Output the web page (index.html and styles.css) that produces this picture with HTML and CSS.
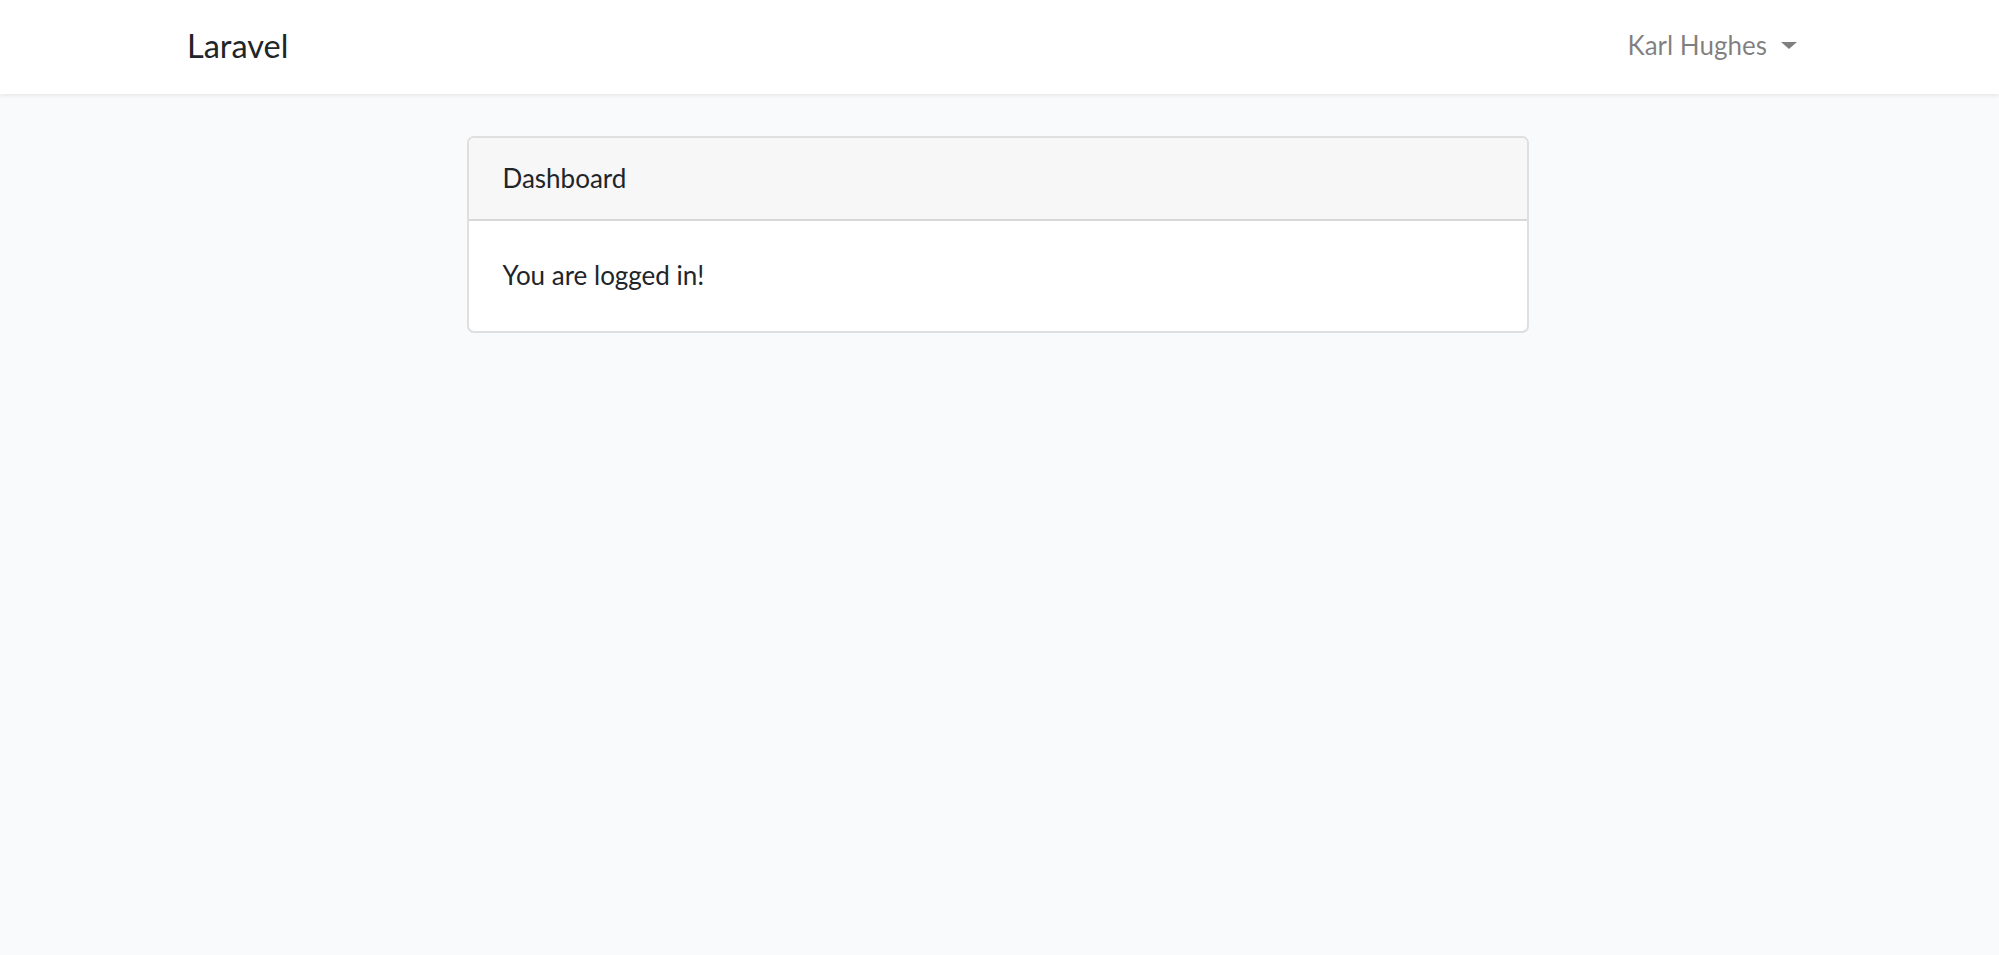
FILE: index.html
```html
<!DOCTYPE html>
<html lang="en">
<head>
    <meta charset="UTF-8">
    <meta name="viewport" content="width=device-width, initial-scale=1.0">
    <title>Laravel</title>
    <link rel="stylesheet" href="styles.css">
</head>
<body>
    <nav class="navbar">
        <div class="navbar-inner">
            <a class="brand" href="#">Laravel</a>
            <div class="user-menu">
                <a class="user-toggle" href="#">Karl Hughes <span class="caret"></span></a>
            </div>
        </div>
    </nav>
    <main class="content">
        <div class="card">
            <div class="card-header">Dashboard</div>
            <div class="card-body">You are logged in!</div>
        </div>
    </main>
</body>
</html>
```

FILE: styles.css
```css
body {
    margin: 0;
    padding: 0;
    font-family: Lato, "Noto Sans", sans-serif;
    font-size: 26px;
    line-height: 1.6;
    color: #212529;
    background-color: #f8fafc;
}
.navbar {
    background-color: #fff;
    height: 94px;
    box-shadow: 0 2px 4px rgba(0, 0, 0, 0.075);
    display: flex;
    align-items: center;
}
.navbar-inner {
    width: 100%;
    padding: 0 187px;
    box-sizing: border-box;
    display: flex;
    justify-content: space-between;
    align-items: center;
}
.brand {
    color: #212529;
    text-decoration: none;
    font-size: 32.5px;
    margin-top: -2px;
}
.user-toggle {
    color: rgba(0, 0, 0, 0.5);
    text-decoration: none;
    display: flex;
    align-items: center;
    gap: 14px;
    margin-right: 15px;
    margin-top: -2px;
}
.caret {
    width: 0;
    height: 0;
    border-top: 7px solid rgba(0, 0, 0, 0.5);
    border-left: 8px solid transparent;
    border-right: 8px solid transparent;
    margin-top: -1px;
}
.content {
    padding-top: 42px;
    display: flex;
    justify-content: center;
}
.card {
    width: 1062px;
    margin-right: 4px;
    box-sizing: border-box;
    background-color: #fff;
    border: 2px solid rgba(0, 0, 0, 0.125);
    border-radius: 7px;
    overflow: hidden;
}
.card-header {
    background-color: #f7f7f7;
    border-bottom: 2px solid rgba(0, 0, 0, 0.125);
    padding: 21px 34px;
    height: 83px;
    box-sizing: border-box;
    display: flex;
    align-items: center;
}
.card-body {
    padding: 34px;
    height: 110px;
    box-sizing: border-box;
    display: flex;
    align-items: center;
}
```
